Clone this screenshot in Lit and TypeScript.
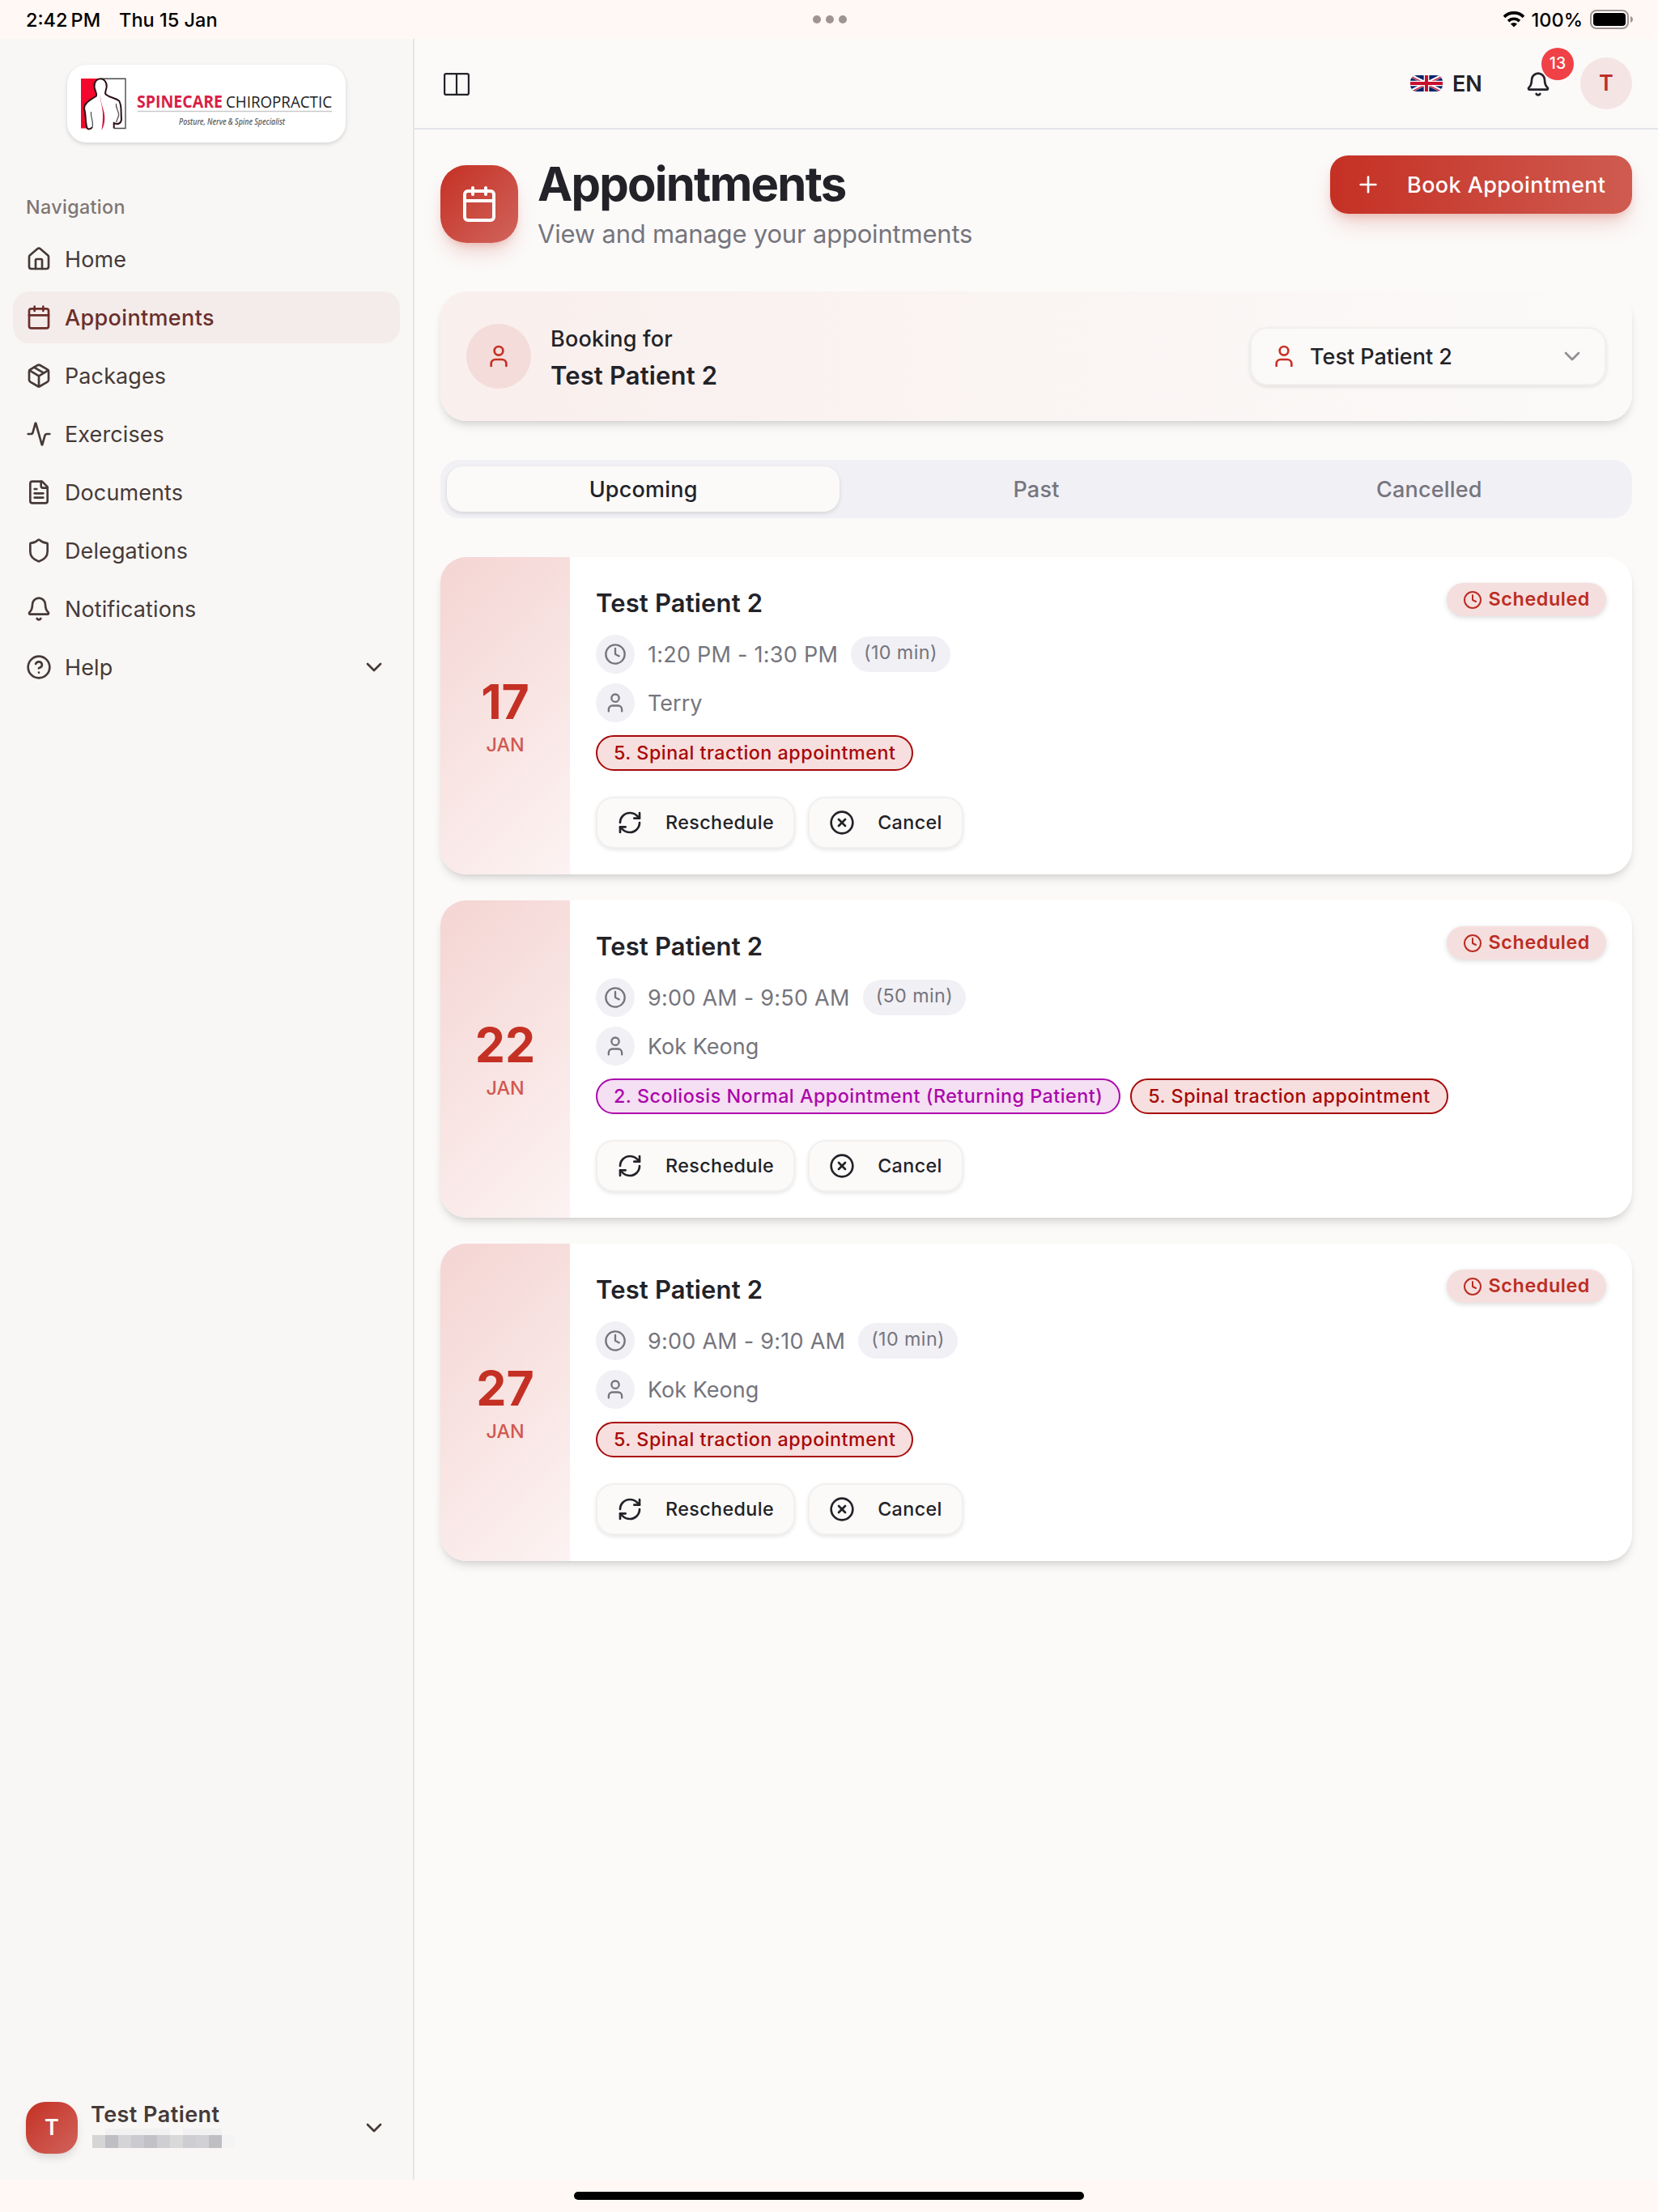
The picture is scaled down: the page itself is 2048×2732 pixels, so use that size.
import { LitElement, html, css, svg } from 'lit';
import { customElement, property, state } from 'lit/decorators.js';
import { classMap } from 'lit/directives/class-map.js';

const icons = {
  home: svg`<path d="M15 21v-8a1 1 0 0 0-1-1h-4a1 1 0 0 0-1 1v8"/><path d="M3 10a2 2 0 0 1 .709-1.528l7-5.999a2 2 0 0 1 2.582 0l7 5.999A2 2 0 0 1 21 10v9a2 2 0 0 1-2 2H5a2 2 0 0 1-2-2z"/>`,
  calendar: svg`<path d="M8 2v4"/><path d="M16 2v4"/><rect width="18" height="18" x="3" y="4" rx="2"/><path d="M3 10h18"/>`,
  package: svg`<path d="M11 21.73a2 2 0 0 0 2 0l7-4A2 2 0 0 0 21 16V8a2 2 0 0 0-1-1.73l-7-4a2 2 0 0 0-2 0l-7 4A2 2 0 0 0 3 8v8a2 2 0 0 0 1 1.73z"/><path d="M12 22V12"/><path d="m3.3 7 7.703 4.734a2 2 0 0 0 1.994 0L20.7 7"/><path d="m7.5 4.27 9 5.15"/>`,
  activity: svg`<path d="M22 12h-2.48a2 2 0 0 0-1.93 1.46l-2.35 8.36a.25.25 0 0 1-.48 0L9.24 2.18a.25.25 0 0 0-.48 0l-2.35 8.36A2 2 0 0 1 4.49 12H2"/>`,
  file: svg`<path d="M15 2H6a2 2 0 0 0-2 2v16a2 2 0 0 0 2 2h12a2 2 0 0 0 2-2V7Z"/><path d="M14 2v4a2 2 0 0 0 2 2h4"/><path d="M10 9H8"/><path d="M16 13H8"/><path d="M16 17H8"/>`,
  shield: svg`<path d="M20 13c0 5-3.5 7.5-7.66 8.95a1 1 0 0 1-.67-.01C7.5 20.5 4 18 4 13V6a1 1 0 0 1 1-1c2 0 4.5-1.2 6.24-2.72a1.17 1.17 0 0 1 1.52 0C14.51 3.81 17 5 19 5a1 1 0 0 1 1 1z"/>`,
  bell: svg`<path d="M10.268 21a2 2 0 0 0 3.464 0"/><path d="M3.262 15.326A1 1 0 0 0 4 17h16a1 1 0 0 0 .74-1.673C19.41 13.956 18 12.499 18 8A6 6 0 0 0 6 8c0 4.499-1.411 5.956-2.738 7.326"/>`,
  help: svg`<circle cx="12" cy="12" r="10"/><path d="M9.09 9a3 3 0 0 1 5.83 1c0 2-3 3-3 3"/><path d="M12 17h.01"/>`,
  chevron: svg`<path d="m6 9 6 6 6-6"/>`,
  plus: svg`<path d="M5 12h14"/><path d="M12 5v14"/>`,
  user: svg`<path d="M19 21v-2a4 4 0 0 0-4-4H9a4 4 0 0 0-4 4v2"/><circle cx="12" cy="7" r="4"/>`,
  clock: svg`<circle cx="12" cy="12" r="10"/><path d="M12 6v6l4 2"/>`,
  refresh: svg`<path d="M3 12a9 9 0 0 1 9-9 9.75 9.75 0 0 1 6.74 2.74L21 8"/><path d="M21 3v5h-5"/><path d="M21 12a9 9 0 0 1-9 9 9.75 9.75 0 0 1-6.74-2.74L3 16"/><path d="M8 16H3v5"/>`,
  cancel: svg`<circle cx="12" cy="12" r="10"/><path d="m15 9-6 6"/><path d="m9 9 6 6"/>`,
};

type IconName = keyof typeof icons;

interface Service {
  name: string;
  tone: 'red' | 'purple';
}

interface Appointment {
  day: number;
  month: string;
  patient: string;
  time: string;
  duration: string;
  therapist: string;
  services: Service[];
}

const navItems: { label: string; icon: IconName; expandable?: boolean }[] = [
  { label: 'Home', icon: 'home' },
  { label: 'Appointments', icon: 'calendar' },
  { label: 'Packages', icon: 'package' },
  { label: 'Exercises', icon: 'activity' },
  { label: 'Documents', icon: 'file' },
  { label: 'Delegations', icon: 'shield' },
  { label: 'Notifications', icon: 'bell' },
  { label: 'Help', icon: 'help', expandable: true },
];

const traction: Service = { name: '5. Spinal traction appointment', tone: 'red' };

const appointments: Appointment[] = [
  {
    day: 17,
    month: 'JAN',
    patient: 'Test Patient 2',
    time: '1:20 PM - 1:30 PM',
    duration: '(10 min)',
    therapist: 'Terry',
    services: [traction],
  },
  {
    day: 22,
    month: 'JAN',
    patient: 'Test Patient 2',
    time: '9:00 AM - 9:50 AM',
    duration: '(50 min)',
    therapist: 'Kok Keong',
    services: [
      { name: '2. Scoliosis Normal Appointment (Returning Patient)', tone: 'purple' },
      traction,
    ],
  },
  {
    day: 27,
    month: 'JAN',
    patient: 'Test Patient 2',
    time: '9:00 AM - 9:10 AM',
    duration: '(10 min)',
    therapist: 'Kok Keong',
    services: [traction],
  },
];

@customElement('ui-icon')
export class UiIcon extends LitElement {
  static styles = css`
    :host {
      display: block;
      flex: none;
      width: 32px;
      height: 32px;
    }

    svg {
      display: block;
      width: 100%;
      height: 100%;
      fill: none;
      stroke: currentColor;
      stroke-width: 2;
      stroke-linecap: round;
      stroke-linejoin: round;
    }
  `;

  @property() name: IconName = 'home';

  render() {
    return html`<svg viewBox="0 0 24 24">${icons[this.name]}</svg>`;
  }
}

@customElement('status-bar')
export class StatusBar extends LitElement {
  static styles = css`
    :host {
      display: grid;
      grid-template-columns: 1fr auto 1fr;
      align-items: center;
      height: 48px;
      padding: 0 30px 0 32px;
      box-sizing: border-box;
      color: #000;
      font-size: 23.5px;
      font-weight: 500;
    }

    .clock {
      display: flex;
      gap: 23px;
    }

    .dots {
      display: flex;
      gap: 6px;
    }

    .dots i {
      width: 10px;
      height: 10px;
      border-radius: 50%;
      background: #9f9492;
    }

    .system {
      display: flex;
      justify-content: flex-end;
      align-items: center;
    }

    .wifi {
      width: 28px;
      height: 20px;
      margin-right: 8px;
    }

    .battery {
      width: 54px;
      height: 24px;
      margin-left: 9px;
    }
  `;

  render() {
    return html`
      <div class="clock"><span>2:42&#8201;PM</span><span>Thu 15 Jan</span></div>
      <div class="dots"><i></i><i></i><i></i></div>
      <div class="system">
        <svg class="wifi" viewBox="0 0 28 20">
          <path d="M14 19.6 9.9 15.5a6 6 0 0 1 8.2 0z" />
          <path d="M7.1 12.1a9.8 9.8 0 0 1 13.8 0M2 6.9a17 17 0 0 1 24 0" fill="none" stroke="#000" stroke-width="3.7" />
        </svg>
        <span>100%</span>
        <svg class="battery" viewBox="0 0 54 24">
          <rect x="1" y="1" width="46" height="22" rx="7" fill="#fff" stroke="#9f9492" stroke-width="2" />
          <rect x="4" y="4" width="40" height="16" rx="4" />
          <path d="M50 8c4 1.5 4 6.5 0 8z" fill="#9f9492" />
        </svg>
      </div>
    `;
  }
}

@customElement('side-nav')
export class SideNav extends LitElement {
  static styles = css`
    :host {
      display: flex;
      flex-direction: column;
      box-sizing: border-box;
      padding: 32px 16px;
      border-right: 2px solid #e4e4eb;
      background: #f8f7f5;
      color: #463a38;
      font-size: 27px;
    }

    .logo {
      align-self: center;
      width: 344px;
      height: 96px;
      border-radius: 24px;
      background: #fff;
      box-shadow: 0 2px 6px rgba(0, 0, 0, 0.1), 0 2px 4px rgba(0, 0, 0, 0.05);
    }

    .logo svg {
      display: block;
    }

    .label {
      margin-top: 48px;
      padding-left: 16px;
      color: #7f7673;
      font-size: 23.3px;
      font-weight: 500;
      letter-spacing: 0.35px;
      line-height: 64px;
    }

    nav {
      display: flex;
      flex-direction: column;
      gap: 8px;
    }

    a {
      display: flex;
      align-items: center;
      gap: 16px;
      height: 64px;
      padding: 0 16px;
      border-radius: 20px;
      letter-spacing: 0.1px;
    }

    a.active {
      background: #f4ecea;
      color: #6b2e2a;
      font-weight: 500;
      letter-spacing: 0.35px;
    }

    .push {
      margin-left: auto;
    }

    .account {
      display: flex;
      align-items: center;
      gap: 16px;
      margin-top: auto;
      padding: 0 16px;
    }

    .avatar {
      width: 64px;
      height: 64px;
      border-radius: 24px;
      background: linear-gradient(135deg, #c53024, #d0645c);
      box-shadow: 0 6px 12px -2px rgba(0, 0, 0, 0.14);
      color: #fff;
      font-weight: 600;
      line-height: 64px;
      text-align: center;
    }

    .who {
      height: 64px;
      font-weight: 600;
      letter-spacing: 0.45px;
    }

    .who span {
      display: block;
      height: 33px;
      line-height: 31px;
    }

    .who svg {
      display: block;
      margin-left: 2px;
    }
  `;

  private masked = ['#d5d5d6', '#bfbec4', '#d4d4d6', '#cbcad0', '#c2c1c8', '#cfced3', '#d9d9da', '#cecdd1', '#d1d0d5', '#bfbec3'];

  render() {
    return html`
      <div class="logo">
        <svg width="344" height="96" viewBox="0 0 344 96">
          <path d="M17 17h25v61.500H17z" fill="#f5062c" />
          <path d="M42 17.300h30v61.200H58" fill="none" stroke="#4a4a4a" stroke-width="1.400" />
          <path
            d="M24.500 78C22 70 23.500 62 21 54c0-7 7-10 15-15.500 1-3.500-2-6.500-2.500-11.500-.5-13 15.500-13 15.200 0-.2 4-2.700 7-1.200 9.500 5.500 4.500 12.500 4.500 16.500 8 4 5.500 2 15.500 3 22.500 0 6-5 7-9.300 5v9.500h-14z"
            fill="#fff"
          />
          <path
            d="M31 77c-2 3-5.500 3-6.500 1C22 70 23.500 62 21 54c0-7 7-10 15-15.500 1-3.500-2-6.500-2.500-11.500-.5-13 15.500-13 15.200 0-.2 4-2.700 7-1.200 9.500 5.500 4.500 12.500 4.500 16.500 8 4 5.500 2 15.500 3 22.500 0 6-5 7-9.300 5v6.500"
            fill="none"
            stroke="#2a1016"
            stroke-width="2"
          />
          <path d="M29.500 58c-1 7 3.500 12 1.500 19M60.500 48c-1 6 4 9 3 15l-3 8" fill="none" stroke="#555" stroke-width="1.300" />
          <path d="M40.500 36c.5 10 2.500 14 3.300 22 .5 8 0 14-1.300 23 5-9 4.500-18 2-26-2.500-7-3-12-4-19z" fill="#d5123f" />
          <text x="86" y="53" font-family="Open Sans, sans-serif" font-size="20.500" font-weight="700" fill="#d81f48" textLength="106" lengthAdjust="spacingAndGlyphs">SPINECARE</text>
          <text x="196" y="53" font-family="Open Sans, sans-serif" font-size="20.500" fill="#222" textLength="131" lengthAdjust="spacingAndGlyphs">CHIROPRACTIC</text>
          <path d="M87 57.500h240" stroke="#c9c9c9" stroke-width="1.500" />
          <text x="138" y="74" font-family="Noto Sans, sans-serif" font-size="10.500" font-style="italic" font-weight="500" fill="#555" textLength="131" lengthAdjust="spacingAndGlyphs">Posture, Nerve &amp; Spine Specialist</text>
        </svg>
      </div>
      <div class="label">Navigation</div>
      <nav>
        ${navItems.map(
          (item) => html`
            <a class=${classMap({ active: item.label === 'Appointments' })}>
              <ui-icon name=${item.icon}></ui-icon>
              <span>${item.label}</span>
              ${item.expandable ? html`<ui-icon class="push" name="chevron"></ui-icon>` : ''}
            </a>
          `
        )}
      </nav>
      <div class="account">
        <div class="avatar">T</div>
        <div class="who">
          <span>Test Patient</span>
          <svg width="176" height="24" viewBox="0 0 176 24">
            <path d="M16 0h64v8H16zM80 0h16v8H80zM112 0h48v8h-48z" fill="#f2f1f1" />
            ${this.masked.map((fill, i) => svg`<rect x=${i * 16} y="8" width="16" height="16" fill=${fill} />`)}
            <path d="M160 8h16v16h-16z" fill="#f5f4f4" />
          </svg>
        </div>
        <ui-icon class="push" name="chevron"></ui-icon>
      </div>
    `;
  }
}

@customElement('top-bar')
export class TopBar extends LitElement {
  static styles = css`
    :host {
      display: flex;
      align-items: center;
      box-sizing: border-box;
      height: 112px;
      padding: 0 32px 0 36px;
      border-bottom: 2px solid #e4e4eb;
      font-size: 27px;
    }

    .toggle {
      margin-top: 2px;
    }

    .flag {
      margin-left: auto;
      border-radius: 8px;
    }

    .lang {
      width: 38px;
      margin: 0 36px 0 12px;
      font-weight: 600;
    }

    .bell {
      position: relative;
      padding: 17px 16px 15px;
    }

    .count {
      position: absolute;
      top: -12px;
      left: 36px;
      width: 40px;
      height: 40px;
      border-radius: 50%;
      background: #ef4146;
      color: #fff;
      font-size: 19.5px;
      font-weight: 500;
      line-height: 39px;
      text-align: center;
    }

    .avatar {
      width: 64px;
      height: 64px;
      margin-left: 20px;
      border-radius: 50%;
      background: #f4e5e4;
      color: #bd2f28;
      font-weight: 600;
      line-height: 64px;
      text-align: center;
    }
  `;

  render() {
    return html`
      <svg class="toggle" width="32" height="28" viewBox="0 0 32 28" fill="none" stroke="#222228" stroke-width="2.2">
        <rect x="1.1" y="1.1" width="29.8" height="25.8" rx="2" />
        <path d="M16 1v26" />
      </svg>
      <svg class="flag" width="40" height="20" viewBox="0 0 60 30">
        <path d="M0 0h60v30H0z" fill="#012169" />
        <path d="m0 0 60 30m0-30L0 30" stroke="#fff" stroke-width="6" />
        <path d="M0 0 30 15M60 30 30 15" stroke="#c8102e" stroke-width="2" transform="translate(-1 1)" />
        <path d="M60 0 30 15M0 30 30 15" stroke="#c8102e" stroke-width="2" transform="translate(1 1)" />
        <path d="M30 0v30M0 15h60" stroke="#fff" stroke-width="10" />
        <path d="M30 0v30M0 15h60" stroke="#c8102e" stroke-width="6" />
      </svg>
      <span class="lang">EN</span>
      <div class="bell">
        <ui-icon name="bell"></ui-icon>
        <span class="count">13</span>
      </div>
      <div class="avatar">T</div>
    `;
  }
}

@customElement('appointment-card')
export class AppointmentCard extends LitElement {
  static styles = css`
    :host {
      display: flex;
      overflow: hidden;
      border-radius: 32px;
      background: #fff;
      box-shadow: 0 8px 12px -2px rgba(0, 0, 0, 0.1), 0 4px 8px -4px rgba(0, 0, 0, 0.12);
    }

    .date {
      display: flex;
      flex-direction: column;
      align-items: center;
      justify-content: center;
      gap: 11px;
      width: 160px;
      background: linear-gradient(135deg, #f4d5d3, #fcf3f2);
      color: #c53024;
    }

    .day {
      font-size: 59px;
      font-weight: 700;
      line-height: 60px;
    }

    .month {
      color: #d0594f;
      font-size: 23.3px;
      font-weight: 500;
      line-height: 24px;
    }

    .body {
      flex: 1;
      padding: 32px;
    }

    .top {
      display: flex;
      justify-content: space-between;
      align-items: flex-start;
      height: 48px;
      margin-bottom: 16px;
    }

    .patient {
      font-size: 31px;
      font-weight: 600;
      letter-spacing: 0.15px;
      line-height: 50px;
    }

    .status {
      display: flex;
      align-items: center;
      gap: 8px;
      height: 41px;
      padding: 0 20px;
      border-radius: 21px;
      background: #f5dfde;
      box-shadow: 0 2px 6px rgba(0, 0, 0, 0.14);
      color: #bc2d23;
      font-size: 23.3px;
      font-weight: 600;
      letter-spacing: 0.6px;
      line-height: 39px;
    }

    .status span {
      height: 41px;
    }

    .status ui-icon {
      width: 24px;
      height: 24px;
    }

    .row {
      display: flex;
      align-items: center;
      gap: 16px;
      margin-bottom: 12px;
      color: #75757d;
      font-size: 27px;
    }

    .time {
      letter-spacing: 0.25px;
    }

    .bubble {
      padding: 10px;
      border-radius: 50%;
      background: #f1f0f5;
    }

    .bubble ui-icon {
      width: 28px;
      height: 28px;
    }

    .duration {
      padding: 0 16px 5px;
      border-radius: 22px;
      background: #f1f0f5;
      font-size: 23.3px;
      letter-spacing: 0.4px;
      line-height: 39px;
    }

    .services {
      display: flex;
      gap: 12px;
      margin-top: 16px;
    }

    .chip {
      padding: 0 20px;
      border: 2px solid;
      border-radius: 22px;
      font-size: 23.3px;
      font-weight: 500;
      letter-spacing: 0.5px;
      line-height: 40px;
    }

    .chip.red {
      background: #f6dfde;
      color: #a80808;
    }

    .chip.purple {
      background: #f5dff3;
      color: #ab07ab;
    }

    .actions {
      display: flex;
      gap: 16px;
      margin-top: 32px;
    }

    button {
      display: flex;
      align-items: center;
      gap: 28px;
      height: 64px;
      padding: 0 24px 1px;
      border: 2px solid #f1f0ef;
      border-radius: 22px;
      background: #fbfaf9;
      box-shadow: 0 2px 5px rgba(0, 0, 0, 0.1);
      color: #222228;
      font-family: inherit;
      font-size: 23.3px;
      font-weight: 500;
      letter-spacing: 0.4px;
    }
  `;

  @property({ attribute: false }) data!: Appointment;

  render() {
    const { day, month, patient, time, duration, therapist, services } = this.data;
    return html`
      <div class="date">
        <span class="day">${day}</span>
        <span class="month">${month}</span>
      </div>
      <div class="body">
        <div class="top">
          <span class="patient">${patient}</span>
          <div class="status"><ui-icon name="clock"></ui-icon><span>Scheduled</span></div>
        </div>
        <div class="row">
          <span class="bubble"><ui-icon name="clock"></ui-icon></span>
          <span class="time">${time}</span>
          <span class="duration">${duration}</span>
        </div>
        <div class="row">
          <span class="bubble"><ui-icon name="user"></ui-icon></span>
          <span>${therapist}</span>
        </div>
        <div class="services">
          ${services.map((s) => html`<span class="chip ${s.tone}">${s.name}</span>`)}
        </div>
        <div class="actions">
          <button><ui-icon name="refresh"></ui-icon>Reschedule</button>
          <button><ui-icon name="cancel"></ui-icon>Cancel</button>
        </div>
      </div>
    `;
  }
}

@customElement('app-root')
export class AppRoot extends LitElement {
  static styles = css`
    :host {
      display: flex;
      flex-direction: column;
      width: 2048px;
      height: 2732px;
      background: #fff8f5;
      color: #222228;
      font-family: Inter, 'Open Sans', sans-serif;
    }

    .shell {
      display: grid;
      grid-template-columns: 512px 1fr;
      height: 2644px;
    }

    .page {
      background: #fbfaf9;
    }

    .content {
      padding: 32px;
    }

    .heading {
      display: flex;
      align-items: center;
      gap: 24px;
    }

    .tile {
      padding: 24px;
      border-radius: 32px;
      background: linear-gradient(135deg, #c53024, #d0645c);
      box-shadow: 0 16px 26px -6px rgba(197, 48, 36, 0.22), 0 6px 10px -4px rgba(197, 48, 36, 0.2);
      color: #fff;
    }

    .tile ui-icon {
      width: 48px;
      height: 48px;
    }

    h1 {
      margin: 0 0 3px;
      font-size: 58px;
      font-weight: 700;
      letter-spacing: -1.8px;
      line-height: 70px;
    }

    .subtitle {
      color: #75757d;
      font-size: 31px;
      letter-spacing: -0.2px;
      line-height: 47px;
    }

    .book {
      display: flex;
      align-self: flex-start;
      align-items: center;
      gap: 32px;
      width: 373px;
      height: 72px;
      margin-left: auto;
      padding: 0 31px;
      box-sizing: border-box;
      border: 0;
      border-radius: 22px;
      background: linear-gradient(to right, #c53024, #cf5b50);
      box-shadow: 0 16px 28px -6px rgba(197, 48, 36, 0.22), 0 6px 12px -4px rgba(197, 48, 36, 0.22);
      color: #fff;
      font-family: inherit;
      font-size: 27px;
      font-weight: 500;
      letter-spacing: 0.4px;
      white-space: nowrap;
    }

    .booking {
      display: flex;
      align-items: center;
      gap: 24px;
      height: 160px;
      margin: 48px 0;
      padding: 0 32px;
      box-sizing: border-box;
      border-radius: 32px;
      background: linear-gradient(to right, #f9efed, #fbfaf9);
      box-shadow: 0 8px 12px -2px rgba(0, 0, 0, 0.1), 0 4px 8px -4px rgba(0, 0, 0, 0.12);
    }

    .person {
      padding: 24px;
      border-radius: 50%;
      background: #f4dcda;
      color: #c53024;
    }

    .caption {
      padding-top: 2px;
      font-size: 27px;
      font-weight: 500;
      letter-spacing: 0.2px;
      line-height: 46px;
    }

    .name {
      font-size: 31px;
      font-weight: 600;
      letter-spacing: 0.15px;
      line-height: 44px;
    }

    .select {
      display: flex;
      align-items: center;
      gap: 16px;
      width: 440px;
      height: 72px;
      margin-left: auto;
      padding: 0 24px;
      box-sizing: border-box;
      border: 2px solid #f1f0ef;
      border-radius: 22px;
      background: rgba(251, 250, 249, 0.8);
      box-shadow: 0 2px 5px rgba(0, 0, 0, 0.1);
      font-size: 27px;
      font-weight: 500;
    }

    .select .red {
      color: #c8322a;
    }

    .select .caret {
      margin-left: auto;
      color: #909093;
    }

    .tabs {
      display: grid;
      grid-template-columns: repeat(3, 1fr);
      padding: 8px;
      border-radius: 24px;
      background: #f1f0f5;
      color: #75757d;
      font-size: 27px;
      font-weight: 500;
      letter-spacing: 0.2px;
      line-height: 58px;
      text-align: center;
    }

    .tabs span {
      height: 56px;
    }

    .tabs .active {
      border-radius: 20px;
      background: #fbfaf9;
      box-shadow: 0 2px 5px rgba(0, 0, 0, 0.12);
      color: #222228;
    }

    .list {
      display: grid;
      gap: 32px;
      margin-top: 48px;
    }

    .home-indicator {
      width: 630px;
      height: 10px;
      margin: 15px auto 0;
      border-radius: 5px;
      background: #000;
    }
  `;

  @state() private tab = 'Upcoming';

  render() {
    return html`
      <status-bar></status-bar>
      <div class="shell">
        <side-nav></side-nav>
        <main class="page">
          <top-bar></top-bar>
          <div class="content">
            <div class="heading">
              <div class="tile"><ui-icon name="calendar"></ui-icon></div>
              <div>
                <h1>Appointments</h1>
                <div class="subtitle">View and manage your appointments</div>
              </div>
              <button class="book"><ui-icon name="plus"></ui-icon>Book Appointment</button>
            </div>
            <div class="booking">
              <div class="person"><ui-icon name="user"></ui-icon></div>
              <div>
                <div class="caption">Booking for</div>
                <div class="name">Test Patient 2</div>
              </div>
              <div class="select">
                <ui-icon class="red" name="user"></ui-icon>
                <span>Test Patient 2</span>
                <ui-icon class="caret" name="chevron"></ui-icon>
              </div>
            </div>
            <div class="tabs">
              ${['Upcoming', 'Past', 'Cancelled'].map(
                (t) => html`<span class=${classMap({ active: t === this.tab })} @click=${() => (this.tab = t)}>${t}</span>`
              )}
            </div>
            <div class="list">
              ${appointments.map((a) => html`<appointment-card .data=${a}></appointment-card>`)}
            </div>
          </div>
        </main>
      </div>
      <div class="home-indicator"></div>
    `;
  }
}
